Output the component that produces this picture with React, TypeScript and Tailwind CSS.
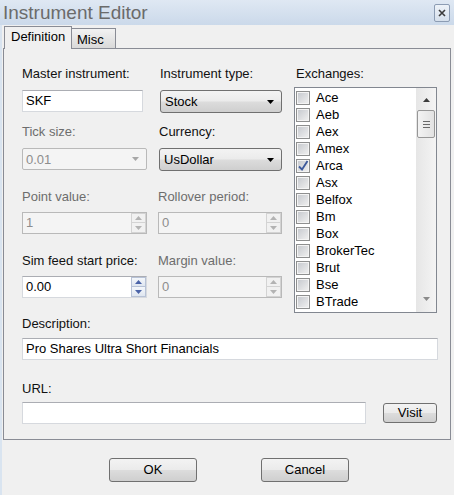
import React from 'react';

const EXCHANGES = ['Ace', 'Aeb', 'Aex', 'Amex', 'Arca', 'Asx', 'Belfox', 'Bm', 'Box', 'BrokerTec', 'Brut', 'Bse', 'BTrade'];

const BTN_BG = 'bg-[linear-gradient(to_bottom,#f3f3f3_0%,#ebebeb_48%,#dcdcdc_52%,#cfcfcf_100%)]';

function Arrow({ dir = 'down', color = '#000' }: { dir?: 'up' | 'down'; color?: string }) {
  return (
    <svg width="7" height="4" viewBox="0 0 7 4">
      <path d={dir === 'down' ? 'M0 0H7L3.5 4Z' : 'M0 4H7L3.5 0Z'} fill={color} />
    </svg>
  );
}

function Label({ children, disabled, className = '' }: { children: React.ReactNode; disabled?: boolean; className?: string }) {
  return (
    <div className={`h-[15px] whitespace-nowrap text-[13px] leading-[15px] ${disabled ? 'text-[#6d6d6d]' : 'text-[#111]'} ${className}`}>
      {children}
    </div>
  );
}

function TextBox({ value = '', className = '' }: { value?: string; className?: string }) {
  return (
    <div className={`h-[22px] border border-[#d6d9de] border-t-[#abadb3] bg-white pl-[3px] text-[13px] leading-[19px] text-black ${className}`}>
      {value}
    </div>
  );
}

function Combo({ value, className = '' }: { value: string; className?: string }) {
  return (
    <div className={`flex h-[23px] items-center justify-between rounded-[3px] border border-[#707070] ${BTN_BG} pl-[4px] pr-[7px] text-[13px] text-black ${className}`}>
      <span className="leading-[19px]">{value}</span>
      <Arrow />
    </div>
  );
}

function DisabledCombo({ value }: { value: string }) {
  return (
    <div className="flex h-[22px] items-center justify-between rounded-[2px] border border-[#b9b9b9] bg-[#f4f4f4] pl-[3px] pr-[7px] text-[13px] text-[#8d8d8d]">
      <span className="leading-[19px]">{value}</span>
      <Arrow color="#a7a7a7" />
    </div>
  );
}

function Spin({ value, disabled }: { value: string; disabled?: boolean }) {
  const box = disabled
    ? 'border-[#d3d3d3] bg-[#f1f1f1]'
    : 'border-[#b7c2d6] bg-[linear-gradient(to_bottom,#f4f7fb,#dfe6f0)]';
  const arrow = disabled ? '#b3b3b3' : '#4a63a8';
  return (
    <div className={`flex h-[22px] border ${disabled ? 'border-[#b9b9b9] bg-[#f4f4f4] text-[#8d8d8d]' : 'border-[#d6d9de] border-t-[#abadb3] bg-white text-black'}`}>
      <div className="flex-1 pl-[3px] text-[13px] leading-[19px]">{value}</div>
      <div className="flex w-[15px] flex-col">
        <div className={`flex h-[10px] items-center justify-center border ${box}`}>
          <Arrow dir="up" color={arrow} />
        </div>
        <div className={`flex h-[10px] items-center justify-center border border-t-0 ${box}`}>
          <Arrow color={arrow} />
        </div>
      </div>
    </div>
  );
}

function Button({ children, className = '' }: { children: React.ReactNode; className?: string }) {
  return (
    <div className={`flex items-center justify-center rounded-[3px] border border-[#707070] ${BTN_BG} text-[13px] text-black ${className}`}>
      {children}
    </div>
  );
}

function CheckBox({ checked }: { checked?: boolean }) {
  return (
    <div className="flex h-[14px] w-[14px] items-center justify-center border border-[#8e8f8f] bg-[#f4f4f4]">
      <div className="relative h-[10px] w-[10px] bg-[linear-gradient(135deg,#c8cbd0,#eeeeee)]">
        {checked && (
          <svg className="absolute left-[-1px] top-[-2px]" width="12" height="13" viewBox="0 0 12 13">
            <path d="M2 7.5L5 10.5L10.5 2" fill="none" stroke="#3d5a9c" strokeWidth="1.8" />
          </svg>
        )}
      </div>
    </div>
  );
}

function ExchangeList() {
  return (
    <div className="flex h-[226px] border border-[#828790] bg-white">
      <div className="flex-1 pt-[1px]">
        {EXCHANGES.map(x => (
          <div key={x} className="flex h-[17px] items-center pl-[1px]">
            <CheckBox checked={x === 'Arca'} />
            <span className="ml-[6px] text-[13px] leading-[17px] text-black">{x}</span>
          </div>
        ))}
      </div>
      <div className="flex w-[20px] flex-col items-center bg-[linear-gradient(to_right,#e6e6e6,#f4f4f4)]">
        <div className="mt-[10px]">
          <Arrow dir="up" color="#3c3c3c" />
        </div>
        <div className="mt-[8px] flex h-[28px] w-[18px] flex-col items-center justify-center gap-[2px] rounded-[2px] border border-[#979797] bg-[linear-gradient(to_right,#f3f3f3,#e2e2e2)]">
          <div className="h-[1px] w-[7px] bg-[#6a6a6a]" />
          <div className="h-[1px] w-[7px] bg-[#6a6a6a]" />
          <div className="h-[1px] w-[7px] bg-[#6a6a6a]" />
        </div>
        <div className="mt-auto mb-[11px]">
          <Arrow color="#8a8a8a" />
        </div>
      </div>
    </div>
  );
}

export default function App() {
  return (
    <div className="flex h-[495px] w-[454px] flex-col overflow-hidden bg-[#f0f0f0] font-['Liberation_Sans',Arial,sans-serif]">
      <div className="flex h-[25px] shrink-0 items-start justify-between bg-[linear-gradient(to_bottom,#dfe8f3,#cbd9ea)] pl-[3px] pr-[4px]">
        <span className="pt-[2px] text-[19px] leading-[22px] text-[#6b6b6b]">Instrument Editor</span>
        <div className="mt-[4px] flex h-[18px] w-[16px] items-center justify-center rounded-[2px] border border-[#8c9cb3] bg-[linear-gradient(to_bottom,#edf2f8,#d6e0ec)]">
          <svg width="8" height="8" viewBox="0 0 8 8">
            <path d="M1 1L7 7M7 1L1 7" stroke="#3b3b3b" strokeWidth="1.6" />
          </svg>
        </div>
      </div>

      <div className="flex flex-1 flex-col border-l-2 border-[#d9e4f0] pl-[1px]">
        <div className="flex items-end pl-[1px] pt-[1px]">
          <div className="relative z-10 -mb-px flex h-[23px] w-[68px] items-start border border-b-0 border-[#898c95] bg-[#f0f0f0] pl-[6px] pt-[2px] text-[13px] leading-[15px] text-black">
            Definition
          </div>
          <div className="flex h-[20px] w-[44px] items-start border border-b-0 border-l-0 border-[#898c95] bg-[linear-gradient(to_bottom,#f2f2f2,#d9d9d9)] pl-[5px] pt-[3px] text-[13px] leading-[15px] text-black">
            Misc
          </div>
        </div>

        <div className="box-border h-[392px] w-[448px] border border-[#898c95] pl-[18px] pt-[17px]">
          <div className="flex">
            <div className="flex w-[260px] flex-col">
              <div className="grid grid-cols-[125px_124px] gap-x-[11px]">
                <div>
                  <Label className="mb-[9px]">Master instrument:</Label>
                  <TextBox value="SKF" className="w-[121px]" />
                </div>
                <div>
                  <Label className="mb-[9px] ml-[2px]">Instrument type:</Label>
                  <Combo value="Stock" className="ml-[2px]" />
                </div>
              </div>
              <div className="mt-[11px] grid grid-cols-[125px_124px] gap-x-[11px]">
                <div>
                  <Label disabled className="mb-[9px]">Tick size:</Label>
                  <DisabledCombo value="0.01" />
                </div>
                <div>
                  <Label className="mb-[9px] ml-[1px]">Currency:</Label>
                  <Combo value="UsDollar" className="ml-[1px]" />
                </div>
              </div>
              <div className="mt-[18px] grid grid-cols-[125px_124px] gap-x-[11px]">
                <div>
                  <Label disabled className="mb-[8px]">Point value:</Label>
                  <Spin value="1" disabled />
                </div>
                <div>
                  <Label disabled className="mb-[8px]">Rollover period:</Label>
                  <Spin value="0" disabled />
                </div>
              </div>
              <div className="mt-[19px] grid grid-cols-[125px_124px] gap-x-[11px]">
                <div>
                  <Label className="mb-[8px]">Sim feed start price:</Label>
                  <Spin value="0.00" />
                </div>
                <div>
                  <Label disabled className="mb-[8px]">Margin value:</Label>
                  <Spin value="0" disabled />
                </div>
              </div>
            </div>
            <div className="ml-[12px] flex w-[143px] flex-col">
              <Label className="mb-[6px] ml-[2px]">Exchanges:</Label>
              <ExchangeList />
            </div>
          </div>

          <Label className="mb-[7px] mt-[3px]">Description:</Label>
          <TextBox value="Pro Shares Ultra Short Financials" className="w-[416px]" />

          <Label className="mb-[6px] mt-[21px]">URL:</Label>
          <div className="flex items-start">
            <TextBox className="h-[21px] w-[344px]" />
            <Button className="ml-[17px] mt-[1px] h-[20px] w-[54px]">Visit</Button>
          </div>
        </div>

        <div className="mt-[18px] flex justify-center gap-[64px] pl-[1px]">
          <Button className="h-[24px] w-[88px]">OK</Button>
          <Button className="h-[24px] w-[88px]">Cancel</Button>
        </div>
      </div>
    </div>
  );
}
